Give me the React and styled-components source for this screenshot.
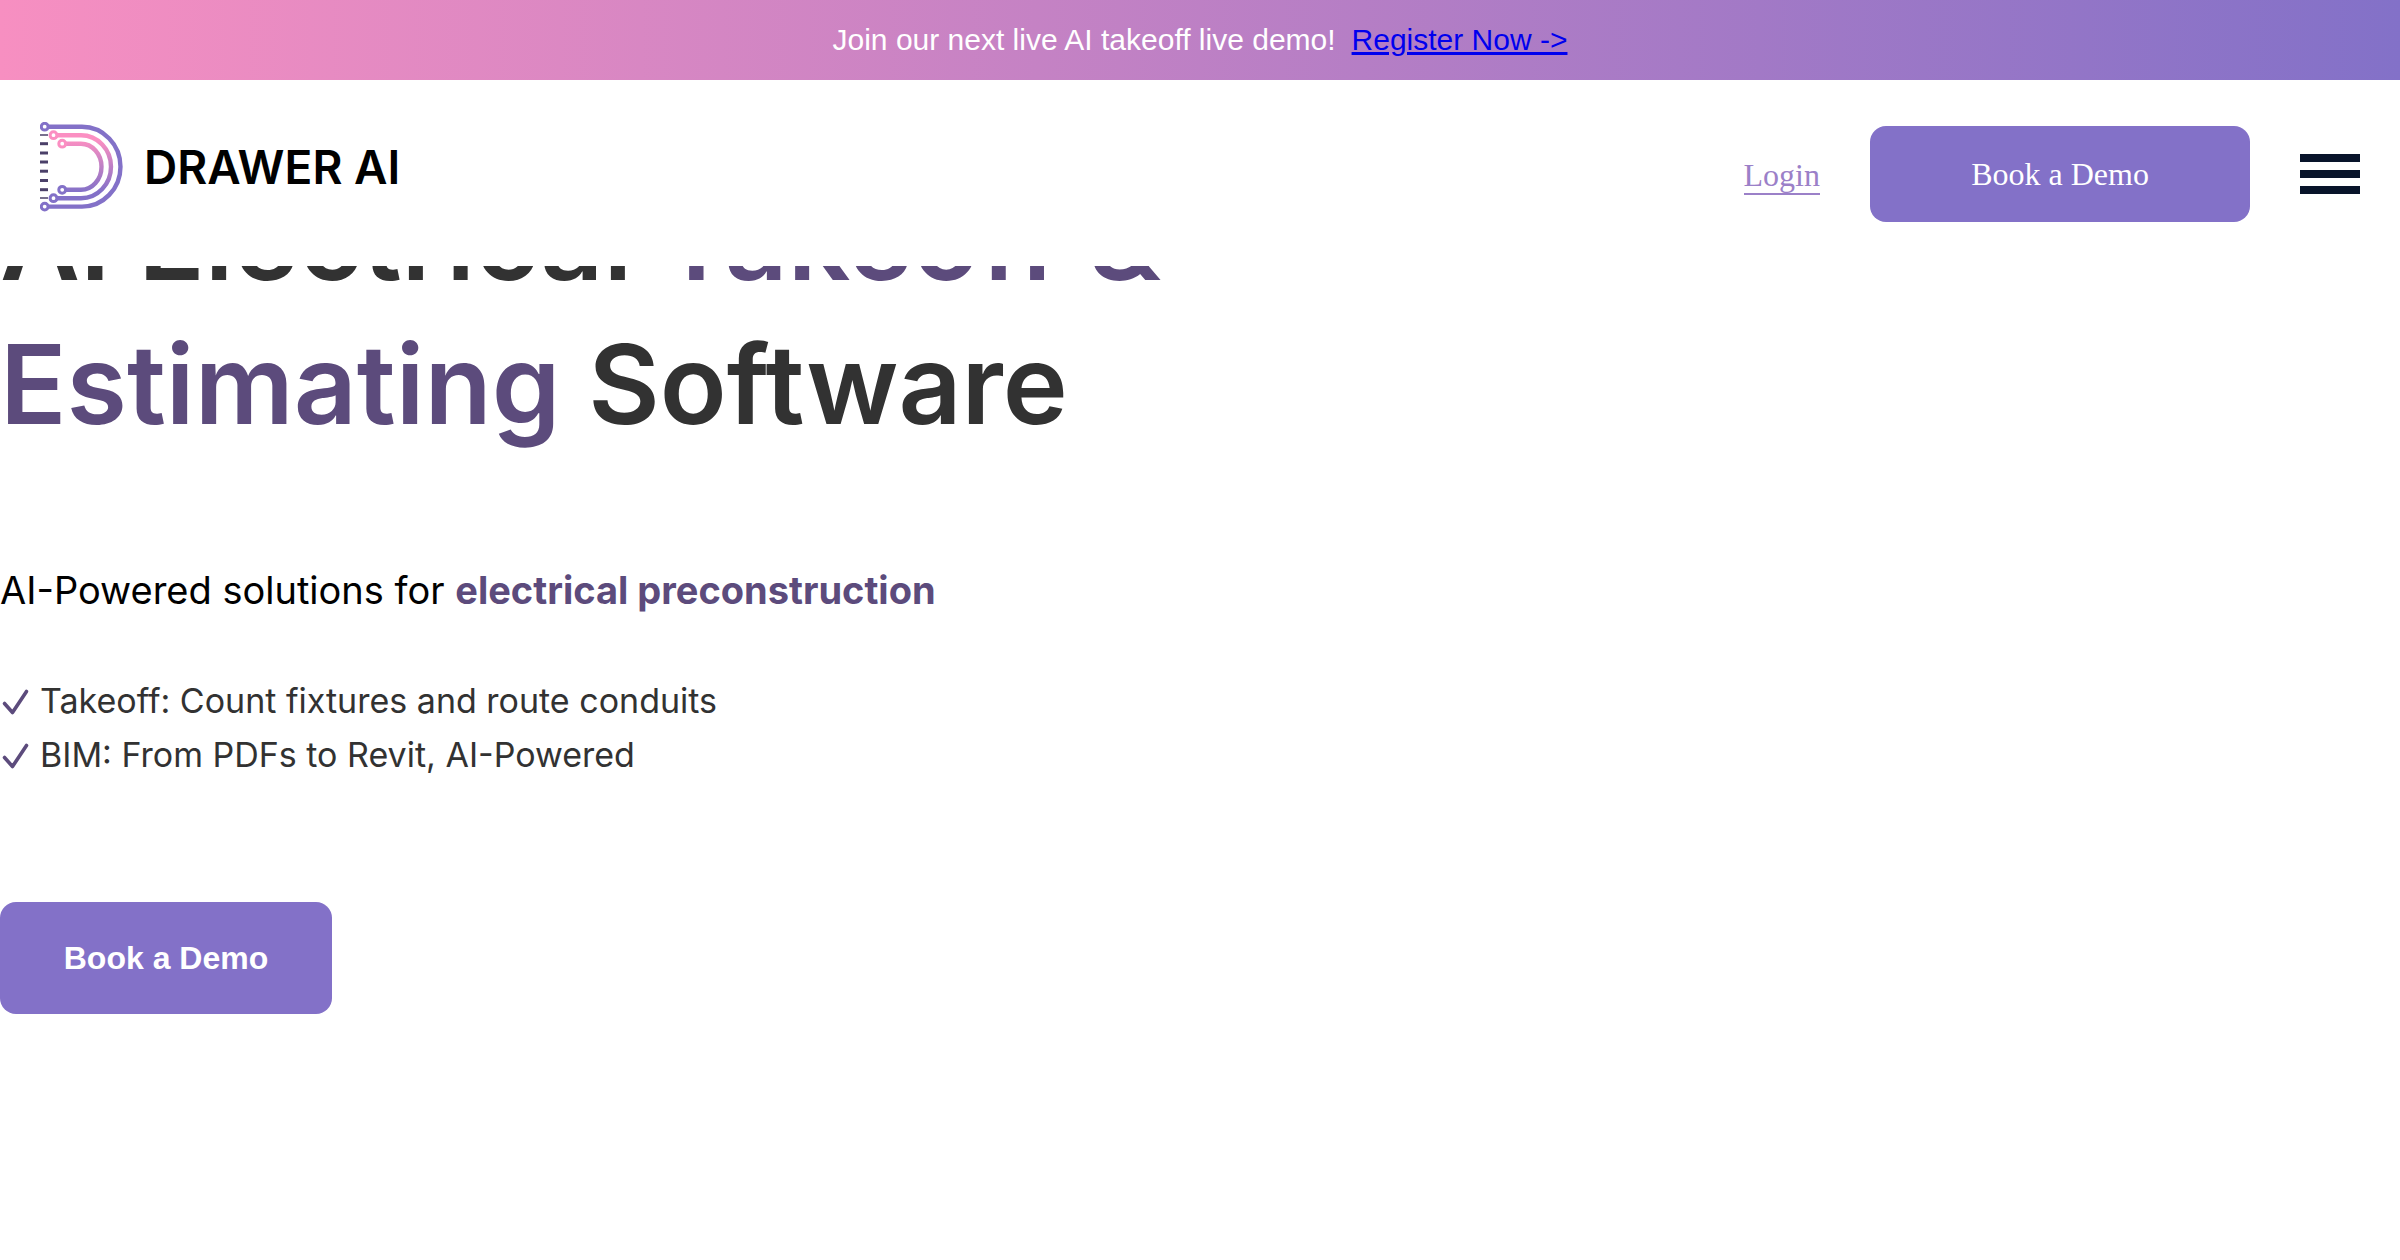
import React from 'react'
import styled, { createGlobalStyle } from "styled-components"

const GlobalStyle = createGlobalStyle`
    *, *::before, *::after {
    box-sizing: border-box;
    }

    body {
    margin: 0;
    background: #ffffff;
    color: #000000;
    font-family: Inter, "Liberation Sans", sans-serif;
    }
`

const TopArea = styled.div`
    position: sticky;
    top: 0;
    z-index: 10;
    background: #ffffff;
`

const Banner = styled.div`
    display: flex;
    justify-content: center;
    align-items: center;
    gap: 16px;
    height: 80px;
    background: linear-gradient(90deg, #f78fc1 0%, #8371c8 100%);
    color: #ffffff;
    font-family: "Liberation Sans", Arial, sans-serif;
    font-size: 30px;
`

const BannerLink = styled.a`
    color: #0000ee;
    text-decoration: underline;
`

const NavBar = styled.header`
    display: flex;
    align-items: center;
    justify-content: space-between;
    height: 186px;
    padding: 2px 40px 0;
`

const Logo = styled.a`
    display: flex;
    align-items: center;
    gap: 18px;
    margin-bottom: 14px;
    color: #000000;
    font-size: 46px;
    font-weight: 600;
    line-height: 48px;
    text-decoration: none;
`

const NavActions = styled.nav`
    display: flex;
    align-items: center;
    gap: 50px;
    font-family: "Liberation Serif", "Times New Roman", serif;
    font-size: 32px;
`

const LoginLink = styled.a`
    margin-top: 4px;
    border-bottom: 2px solid #9b80c8;
    color: #9b80c8;
    line-height: 36px;
    text-decoration: none;
`

const DemoButton = styled.button`
    border: none;
    border-radius: 16px;
    background: #8371c8;
    color: #ffffff;
    cursor: pointer;
    font-size: 32px;
`

const NavDemoButton = styled(DemoButton)`
    width: 380px;
    height: 96px;
    font-family: inherit;
`

const HeroDemoButton = styled(DemoButton)`
    width: 332px;
    height: 112px;
    font-family: "Liberation Sans", Arial, sans-serif;
    font-weight: 700;
`

const MenuButton = styled.button`
    display: flex;
    flex-direction: column;
    gap: 8px;
    width: 60px;
    padding: 0;
    border: none;
    background: none;
    cursor: pointer;
`

const MenuBar = styled.span`
    height: 8px;
    background: #08142a;
`

const Hero = styled.main`
    margin-top: -98px;
    padding-bottom: 120px;
`

const Title = styled.h1`
    max-width: 1200px;
    margin: 0;
    color: #323232;
    font-size: 110px;
    font-weight: 600;
    line-height: 144px;
`

const Accent = styled.span`
    color: #5c4b7c;
`

const Subtitle = styled.p`
    margin: 110px 0 60px;
    font-size: 38px;
    line-height: 48px;
`

const StrongAccent = styled.strong`
    color: #5c4b7c;
    font-weight: 700;
`

const FeatureList = styled.ul`
    margin: 0 0 120px;
    padding: 0;
    color: #323232;
    font-size: 34px;
    line-height: 54px;
    list-style: none;
`

const Feature = styled.li`
    display: flex;
    align-items: center;
    gap: 8px;
`

const features = [
    "Takeoff: Count fixtures and route conduits",
    "BIM: From PDFs to Revit, AI-Powered",
]

const nodes = [
    { x: 4.7, y: 4.7, color: "#8371c8" },
    { x: 13.5, y: 13.2, color: "#fb8fc2" },
    { x: 22.2, y: 21.7, color: "#fb8fc2" },
    { x: 22.2, y: 67.8, color: "#8371c8" },
    { x: 13.5, y: 76.2, color: "#8371c8" },
    { x: 4.7, y: 84.6, color: "#8371c8" },
]

const ticks = [21.7, 31, 40, 49.2, 58.5, 67.7]

function LogoMark() {
    return (
        <svg width="86" height="90" viewBox="0 0 86 90" fill="none" aria-hidden="true">
            <defs>
                <linearGradient id="wire" x1="0" y1="18" x2="0" y2="70" gradientUnits="userSpaceOnUse">
                    <stop offset="0" stopColor="#fb8fc2" />
                    <stop offset="1" stopColor="#8371c8" />
                </linearGradient>
            </defs>
            <path d="M8 4.7H42A38.5 39.95 0 0 1 42 84.6H8" stroke="#8371c8" strokeWidth="4.4" />
            <path d="M17 13.2H41A30 31.5 0 0 1 41 76.2H17" stroke="url(#wire)" strokeWidth="4.4" />
            <path d="M26 21.7H41A20.5 23.05 0 0 1 41 67.8H26" stroke="url(#wire)" strokeWidth="4.4" />
            {nodes.map(({ x, y, color }) => (
                <circle key={`${x}-${y}`} cx={x} cy={y} r="3.4" stroke={color} strokeWidth="3" fill="#ffffff" />
            ))}
            <path d="M0 13H8M0 76H8" stroke="#4b4069" strokeWidth="1.4" />
            {ticks.map(y => <path key={y} d={`M0 ${y}H8`} stroke="#4b4069" strokeWidth="3" />)}
        </svg>
    )
}

function CheckIcon() {
    return (
        <svg width="32" height="32" viewBox="0 0 32 32" fill="none" aria-hidden="true">
            <path d="M4.500 18.500L12.500 27.500L26.500 6.500" stroke="#5c4b7c" strokeWidth="3.6" strokeLinecap="round" strokeLinejoin="round" />
        </svg>
    )
}

function App() {
    return (
        <>
            <GlobalStyle />
            <TopArea>
                <Banner>
                    <span>Join our next live AI takeoff live demo!</span>
                    <BannerLink href="#register">Register Now -&gt;</BannerLink>
                </Banner>
                <NavBar>
                    <Logo href="#home">
                        <LogoMark />
                        <span>DRAWER AI</span>
                    </Logo>
                    <NavActions>
                        <LoginLink href="#login">Login</LoginLink>
                        <NavDemoButton type="button">Book a Demo</NavDemoButton>
                        <MenuButton type="button" aria-label="Menu">
                            <MenuBar />
                            <MenuBar />
                            <MenuBar />
                        </MenuButton>
                    </NavActions>
                </NavBar>
            </TopArea>
            <Hero>
                <Title>
                    AI Electrical <Accent>Takeoff &amp; Estimating</Accent> Software
                </Title>
                <Subtitle>
                    AI-Powered solutions for <StrongAccent>electrical preconstruction</StrongAccent>
                </Subtitle>
                <FeatureList>
                    {features.map(feature => (
                        <Feature key={feature}>
                            <CheckIcon />
                            <span>{feature}</span>
                        </Feature>
                    ))}
                </FeatureList>
                <HeroDemoButton type="button">Book a Demo</HeroDemoButton>
            </Hero>
        </>
    )
}

export default App
